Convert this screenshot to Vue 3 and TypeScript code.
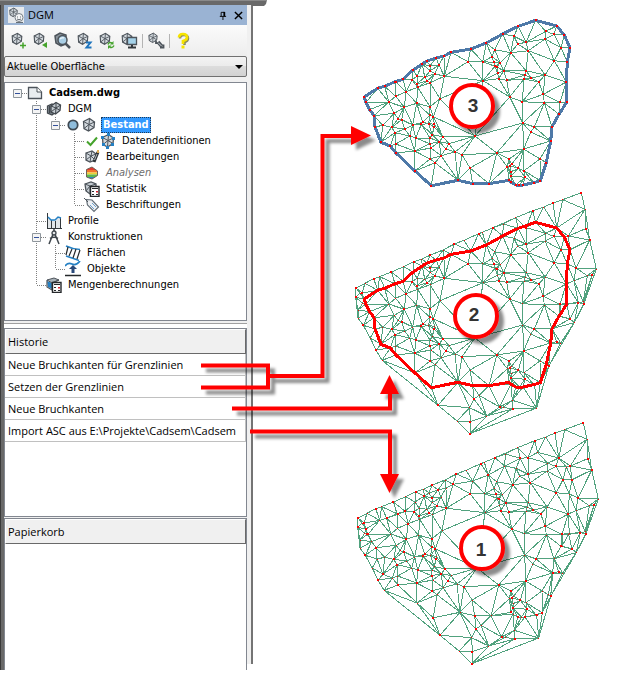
<script setup lang="ts">
import { ref } from 'vue'

type Point = [number, number]

interface TreeRow {
  label: string
  icons: string[]
  guides: string[]
  style?: 'root' | 'selected' | 'muted'
}

/* Guide codes: t = line up, b = line down, r = line right, x = expander box */
const rows: TreeRow[] = [
  { label: 'Cadsem.dwg', icons: ['doc'], guides: ['rx'], style: 'root' },
  { label: 'DGM', icons: ['layers'], guides: ['', 'tbrx'] },
  { label: 'Bestand', icons: ['dot', 'tin'], guides: ['', 'tb', 'trx'], style: 'selected' },
  { label: 'Datendefinitionen', icons: ['check', 'nodes'], guides: ['', 'tb', '', 'tbr'] },
  { label: 'Bearbeitungen', icons: ['edit'], guides: ['', 'tb', '', 'tbr'] },
  { label: 'Analysen', icons: ['analysis'], guides: ['', 'tb', '', 'tbr'], style: 'muted' },
  { label: 'Statistik', icons: ['stats'], guides: ['', 'tb', '', 'tbr'] },
  { label: 'Beschriftungen', icons: ['tag'], guides: ['', 'tb', '', 'tr'] },
  { label: 'Profile', icons: ['profile'], guides: ['', 'tbr'] },
  { label: 'Konstruktionen', icons: ['compass'], guides: ['', 'tbrx'] },
  { label: 'Flächen', icons: ['areas'], guides: ['', 'tb', 'tbr'] },
  { label: 'Objekte', icons: ['objects'], guides: ['', 'tb', 'tr'] },
  { label: 'Mengenberechnungen', icons: ['volume'], guides: ['', 'tr'] },
]

function guidePath(code: string): string {
  let d = ''
  if (code.includes('t')) d += 'M9.5 0V8'
  if (code.includes('b')) d += 'M9.5 8V16'
  if (code.includes('r')) d += 'M10 8.5H19'
  return d
}

const tools = [
  { icon: 'tool-add', label: 'Neues DGM' },
  { icon: 'tool-import', label: 'DGM importieren' },
  { icon: 'tool-search', label: 'DGM suchen' },
  { icon: 'tool-z', label: 'Höhe abfragen' },
  { icon: 'tool-refresh', label: 'Aktualisieren' },
  { icon: 'tool-screen', label: 'Anzeige' },
]

const surface = ref('Aktuelle Oberfläche')
const history = [
  'Neue Bruchkanten für Grenzlinien',
  'Setzen der Grenzlinien',
  'Neue Bruchkanten',
  'Import ASC aus E:\\Projekte\\Cadsem\\Cadsem',
]

/* Survey points, in thirds of a drawing unit */
function parse(list: string, dx: number, dy: number): Point[] {
  return list
    .trim()
    .split(/\s+/)
    .map((pair) => {
      const [x, y] = pair.split(',').map(Number)
      return [(x + dx) / 3, (y + dy) / 3] as Point
    })
}

const border = parse(
  `42,261 83,235 104,229 135,215 160,208 189,180 217,162 231,153 258,144 282,138 303,127 362,117
   409,99 458,72 505,49 557,31 620,48 643,75 660,113 652,156 649,216 650,277 627,313 606,350
   602,393 589,458 571,512 551,518 519,525 508,526 497,525 483,517 477,511 417,521 368,521
   324,511 244,527 195,483 138,429 121,408 93,397 75,351 72,317 59,299 48,277`,
  0, 0,
)

const inner = parse(
  `587,64 612,73 492,79 528,97 503,102 482,128 434,119 535,122 585,87 633,113 426,140 354,155
   398,155 431,157 450,158 441,171 435,169 461,182 528,182 613,152 443,190 446,206 399,212
   470,211 526,195 543,204 522,207 566,216 585,195 479,261 517,275 580,253 583,279 630,277 518,339
   553,351 542,366 521,417 570,447 440,429 375,378 477,447 485,462 481,467 472,470 505,475
   522,482 525,502 483,485 483,498 360,474 336,434 315,426 279,380 297,401 287,416 273,437
   268,395 255,458 240,447 243,414 239,401 247,374 194,423 137,402 197,384 179,378 214,343
   188,345 218,337 164,357 125,352 98,346 135,368 144,326 155,329 133,310 163,292
   116,276 168,245 137,259 138,217 201,198 201,221 203,232 186,210 224,202 232,213 240,218
   254,191 267,165 240,168 241,182 283,199 200,280 240,290 270,266 239,315 236,341 250,320
   253,343 252,351 240,384`,
  0, 0,
)

const hull = parse(
  `38,309 65,295 91,281 109,275 144,261 181,245 211,230 235,222 260,211 299,195 333,177 362,166
   406,146 417,142 449,128 517,98 568,77 601,66 629,54 658,44 714,23 725,73 739,165 759,252
   722,356 693,413 616,544 580,669 380,746 341,708 284,661 116,526 98,495 81,459 60,421
   44,400 37,337`,
  -20, -81,
)

const fringe = parse(
  `50,324 56,324 58,355 66,358 44,375 727,131 732,272 746,270 720,350 705,353 692,287 698,249
   672,355 675,153 480,117 548,128 650,393 680,402 652,474 640,470 430,693 381,710 379,668
   392,642 407,631 508,672 480,667 469,666 507,646 574,600 528,606`,
  -20, -81,
)

/* Bowyer-Watson Delaunay triangulation */
function triangulate(points: Point[]): number[][] {
  const n = points.length
  const pts: Point[] = [...points, [-20000, -15000], [20000, -15500], [300, 30000]]
  const circle = (t: number[]) => {
    const [a, b, c] = t.map((i) => pts[i])
    const bx = b[0] - a[0], by = b[1] - a[1], cx = c[0] - a[0], cy = c[1] - a[1]
    const d = 2 * (bx * cy - by * cx) || 1e-9
    const ux = (cy * (bx * bx + by * by) - by * (cx * cx + cy * cy)) / d
    const uy = (bx * (cx * cx + cy * cy) - cx * (bx * bx + by * by)) / d
    return { t, x: a[0] + ux, y: a[1] + uy, r: ux * ux + uy * uy }
  }
  let tris = [circle([n, n + 1, n + 2])]
  for (let i = 0; i < n; i++) {
    const [px, py] = pts[i]
    const edges = new Map<string, [number, number]>()
    tris = tris.filter((c) => {
      if ((px - c.x) ** 2 + (py - c.y) ** 2 >= c.r) return true
      for (let k = 0; k < 3; k++) {
        const a = c.t[k], b = c.t[(k + 1) % 3]
        const key = a < b ? `${a}-${b}` : `${b}-${a}`
        if (edges.has(key)) edges.delete(key)
        else edges.set(key, [a, b])
      }
      return false
    })
    edges.forEach(([a, b]) => tris.push(circle([a, b, i])))
  }
  return tris.map((c) => c.t).filter((t) => t.every((i) => i < n))
}

function inside([x, y]: Point, poly: Point[]): boolean {
  let hit = false
  for (let i = 0, j = poly.length - 1; i < poly.length; j = i++) {
    const [xi, yi] = poly[i], [xj, yj] = poly[j]
    if (yi > y !== yj > y && x < ((xj - xi) * (y - yi)) / (yj - yi) + xi) hit = !hit
  }
  return hit
}

function meshPath(points: Point[], outline: Point[]): string {
  const seen = new Set<string>()
  let d = ''
  for (const t of triangulate(points)) {
    const mid: Point = [
      (points[t[0]][0] + points[t[1]][0] + points[t[2]][0]) / 3,
      (points[t[0]][1] + points[t[1]][1] + points[t[2]][1]) / 3,
    ]
    if (!inside(mid, outline)) continue
    for (let k = 0; k < 3; k++) {
      const a = Math.min(t[k], t[(k + 1) % 3]), b = Math.max(t[k], t[(k + 1) % 3])
      if (seen.has(`${a}-${b}`)) continue
      seen.add(`${a}-${b}`)
      d += `M${points[a].map((v) => v.toFixed(1))}L${points[b].map((v) => v.toFixed(1))}`
    }
  }
  return d
}

const ring = (pts: Point[]) => pts.map((p) => p.map((v) => v.toFixed(1)).join(',')).join(' ')
const dots = (pts: Point[], s: number) =>
  pts.map(([x, y]) => `M${Math.round(x - s / 2)} ${Math.round(y - s / 2)}h${s}v${s}h-${s}z`).join('')

const fullPoints = [...border, ...inner, ...hull, ...fringe]
const fullMesh = meshPath(fullPoints, hull)
const clippedMesh = meshPath([...border, ...inner], border)
const borderRing = ring(border)
const hullRing = ring(hull)
const sparse = fullPoints.filter((_, i) => i % 2 === 0)
const dense = fullPoints.filter((_, i) => i % 2 === 1)
const fullDots = dots(sparse, 2) + dots(dense, 1)
const clippedDots = dots([...border, ...inner], 2)
</script>

<template>
  <svg class="symbols" aria-hidden="true">
    <defs>
      <symbol id="tin" viewBox="0 0 16 16">
        <path d="M2.5 4.5 8.5 1.5 13.5 5 13 10.5 7.5 14 3 11.5Z" fill="#d3d9de" stroke="#4d545b" stroke-width="1.3" />
        <path d="M2.5 4.5 8 7.5 13.5 5M8 7.5 8.5 1.5M8 7.5 13 10.5M8 7.5 7.5 14M8 7.5 3 11.5" fill="none" stroke="#4d545b" />
      </symbol>
      <symbol id="doc" viewBox="0 0 16 16">
        <path d="M1.5 2.5H10L14.5 7V13.5H1.5Z" fill="#e9edf0" stroke="#4d545b" stroke-width="1.3" />
        <path d="M10 2.5V7H14.5" fill="#fff" stroke="#4d545b" />
      </symbol>
      <symbol id="layers" viewBox="0 0 16 16">
        <path d="M1.500 5 6 3 10 5V11L6 14 1.500 12Z" fill="#7b848b" stroke="#41474d" stroke-width="1.3" />
        <path d="M5 5 10 1.500 14.500 4 14 9.500 9.500 13 5 11Z" fill="#c3cad0" stroke="#41474d" stroke-width="1.3" />
        <path d="M5 5 10 7 14.500 4M10 7V1.500M10 7 14 9.500M10 7 9.500 13M10 7 5 11M3.500 5V12" fill="none" stroke="#41474d" />
      </symbol>
      <symbol id="dot" viewBox="0 0 16 16">
        <circle cx="8" cy="8" r="4.7" fill="#8fbddc" stroke="#3f4952" stroke-width="1.8" />
      </symbol>
      <symbol id="check" viewBox="0 0 16 16">
        <path d="M3 8.5 6.5 12 13 4.5" fill="none" stroke="#45a32c" stroke-width="2" />
      </symbol>
      <symbol id="nodes" viewBox="0 0 16 16">
        <use href="#tin" />
        <path d="M1 3h3v3H1zM7 0h3v3H7zM12 4h3v3h-3zM11 10h3v3h-3zM6 13h3v3H6zM2 10h3v3H2z" fill="#2480c4" />
      </symbol>
      <symbol id="edit" viewBox="0 0 16 16">
        <path d="M2 4 8 2 12 5 11 11 6 13 2 11Z" fill="#d3d9de" stroke="#4d545b" stroke-width="1.3" />
        <path d="M2 4 7 7 12 5M7 7 8 2M7 7 2 11M7 7 6 13M7 7 11 11" fill="none" stroke="#4d545b" />
        <path d="M10 13 14 3" stroke="#2f3438" stroke-width="3" /><path d="M10.500 11 13 5" stroke="#b0b6bb" />
        <path d="M13 1h2v3h-2z" fill="#dfad57" />
      </symbol>
      <symbol id="analysis" viewBox="0 0 16 16">
        <clipPath id="analysis-shape"><path d="M2.500 4.500 8 2 13.500 6V10.500L8 14 2.500 12Z" /></clipPath>
        <g clip-path="url(#analysis-shape)">
          <path d="M2 1H14V5H2Z" fill="#e3382c" /><path d="M2 5H14V7.500H2Z" fill="#f2742a" />
          <path d="M2 7.500H14V9.500H2Z" fill="#ecd035" /><path d="M2 9.500H14V12H2Z" fill="#5cb94c" />
          <path d="M2 12H14V15H2Z" fill="#2a88c8" />
        </g>
        <path d="M2.500 4.500 8 2 13.500 6V10.500L8 14 2.500 12Z" fill="none" stroke="#6d6257" />
      </symbol>
      <symbol id="calc" viewBox="0 0 16 16">
        <path d="M6.500 5.500H15V15.500H6.500Z" fill="#fff" stroke="#25282b" stroke-width="1.400" />
        <path d="M8 7h6v1H8zM8 10h2v1H8zM8 13h2v1H8zM12 13h2v1h-2z" fill="#25282b" /><path d="M12 10h2v1.500h-2z" fill="#dc2430" />
      </symbol>
      <symbol id="stats" viewBox="0 0 16 16">
        <path d="M1 3 7 1 12 3 12 9 6 13 2 10Z" fill="#c5ccd2" stroke="#4d545b" stroke-width="1.300" />
        <path d="M1 3 6 5 12 3M6 5 2 10M6 5V12" fill="none" stroke="#4d545b" /><use href="#calc" />
      </symbol>
      <symbol id="tag" viewBox="0 0 16 16">
        <path d="M2.500 2.500 8 3 14.500 10 10 14.500 3.500 8Z" fill="#eef1f4" stroke="#667078" stroke-width="1.200" />
        <path d="M6 8 10 12M8 6 12 10" stroke="#6ca0cc" /><path d="M0 1 4 5" stroke="#4d545b" />
      </symbol>
      <symbol id="profile" viewBox="0 0 16 16">
        <path d="M1 4 5 7 9 8 12 4H15V15H1Z" fill="#e2e6e9" />
        <path d="M1.500 0V15.500M5.500 7V15M9.500 8V15M14.500 5V15M1 15.500H16" fill="none" stroke="#33383c" />
        <path d="M2 4 5 7 9 7 12 4 15 5" fill="none" stroke="#2480c4" stroke-width="1.500" />
      </symbol>
      <symbol id="compass" viewBox="0 0 16 16">
        <path d="M7.500 4 3 15M8.500 4 13 15M4 9.500Q8 7 12 9.500" fill="none" stroke="#3f464c" stroke-width="1.500" />
        <circle cx="8" cy="4" r="2" fill="#e4e7e9" stroke="#3f464c" stroke-width="1.300" /><path d="M8 0V2" stroke="#3f464c" stroke-width="1.500" />
      </symbol>
      <symbol id="areas" viewBox="0 0 16 16">
        <path d="M1 1Q7 4 15 4.500M1 11Q7 13 14 15.500" fill="none" stroke="#2480c4" stroke-width="1.500" />
        <path d="M3 2 1 10M7 4 4 11M11 4 8 13M15 5 12 14" fill="none" stroke="#25282b" stroke-width="1.200" />
      </symbol>
      <symbol id="objects" viewBox="0 0 16 16">
        <path d="M0 5Q3 1 7 3T15 0" fill="none" stroke="#2480c4" stroke-width="1.700" />
        <path d="M8 4 12 8H9.500V12H6.500V8H4Z" fill="#294979" /><path d="M0 14.500H16" stroke="#25282b" stroke-width="1.500" />
      </symbol>
      <symbol id="volume" viewBox="0 0 16 16">
        <path d="M1 4 6 6V12L2 10Z" fill="#2480c4" /><path d="M1 3 8 1 13 3 6 6Z" fill="#a8b1b8" stroke="#4d545b" />
        <path d="M1 3V10L6 13V6L13 3" fill="none" stroke="#4d545b" stroke-width="1.200" /><use href="#calc" />
      </symbol>

      <symbol id="tool-add" viewBox="0 0 18 18">
        <use href="#tin" width="14" height="14" /><path d="M10 13.500H16M13 10.500V16.500" stroke="#45a32c" stroke-width="1.500" />
      </symbol>
      <symbol id="tool-import" viewBox="0 0 18 18">
        <use href="#tin" width="14" height="14" /><path d="M10 13 15 10V16Z" fill="#45a32c" />
      </symbol>
      <symbol id="tool-search" viewBox="0 0 18 18">
        <path d="M1 4 6 1 12 3V12L7 14 2 11Z" fill="#8b949b" stroke="#4d545b" stroke-width="1.500" /><path d="M11.500 11.500 16 16" stroke="#4d545b" stroke-width="2.500" />
        <circle cx="8.500" cy="8" r="4.500" fill="#a9cee5" stroke="#4d545b" stroke-width="1.500" /><path d="M6 7Q8 5 10 6" fill="none" stroke="#e7f3fa" stroke-width="1.500" />
      </symbol>
      <symbol id="tool-z" viewBox="0 0 18 18">
        <use href="#tin" width="14" height="14" /><path d="M10 10.500H14.500L10.500 15.500H15.500" fill="none" stroke="#1d74bd" stroke-width="2" />
      </symbol>
      <symbol id="tool-refresh" viewBox="0 0 18 18">
        <use href="#tin" width="14" height="14" />
        <path d="M10 12.500Q11 9.500 14 11M16 13.500Q14.500 16.500 11.500 15" fill="none" stroke="#45a32c" stroke-width="1.500" />
        <path d="M15.500 9V12.500H12ZM10 17V13.500H13.500Z" fill="#45a32c" />
      </symbol>
      <symbol id="tool-screen" viewBox="0 0 18 18">
        <use href="#tin" width="14" height="14" /><path d="M7.500 5.500H16.500V12.500H7.500Z" fill="#a5d2e9" stroke="#4d545b" stroke-width="1.300" />
        <path d="M12 13V15M8 15.500H16" stroke="#33383c" stroke-width="2" />
      </symbol>
      <symbol id="tool-options" viewBox="0 0 18 18">
        <use href="#tin" width="12" height="12" />
        <path d="M11 10 15 14.500" stroke="#4d545b" stroke-width="3.500" /><path d="M9 8.500V11H12M13 15.500H16.500V12.500" fill="none" stroke="#4d545b" stroke-width="1.800" />
        <path d="M11 10.500 14.500 14" stroke="#cdd2d6" />
      </symbol>
      <symbol id="tool-help" viewBox="0 0 18 18">
        <path d="M5 5.500Q5 2 9 2T13 5.500Q13 8 9.500 9V12" fill="none" stroke="#8b8a5c" stroke-width="2.500" transform="translate(1 1)" />
        <path d="M5 5.500Q5 2 9 2T13 5.500Q13 8 9 9V12" fill="none" stroke="#f7e400" stroke-width="2.700" /><path d="M7.500 13.500h3v3h-3z" fill="#f7e400" />
      </symbol>
      <symbol id="brand" viewBox="0 0 16 16">
        <path d="M0 0H16V16H0Z" fill="#e6e9ec" /><use href="#tin" width="11" height="11" />
        <circle cx="11" cy="10.500" r="4" fill="#f4f5f6" stroke="#777f86" /><path d="M9.500 9.500v1M12.500 9.500v1M9 12Q11 13.500 13 12M8 15.500H15" fill="none" stroke="#666e75" />
      </symbol>

      <filter id="shadow" x="-20%" y="-20%" width="150%" height="150%">
        <feDropShadow dx="5" dy="5" stdDeviation="1.500" flood-color="#000" flood-opacity="0.450" />
      </filter>
    </defs>
  </svg>

  <main class="page">
    <section class="dock" aria-label="DGM">
      <div class="edge-left"></div>
      <div class="dock-body">
        <header class="titlebar">
          <svg class="icon"><use href="#brand" /></svg>
          <h1>DGM</h1>
          <button class="caption" aria-label="Anheften">
            <svg viewBox="0 0 10 10"><path d="M3.500 6V1.500H7M2 6H9M5.500 6V10" fill="none" stroke="#000" /><path d="M6 1H8V6H6Z" /></svg>
          </button>
          <button class="caption" aria-label="Schließen">
            <svg viewBox="0 0 10 10"><path d="M1 1 9 9M9 1 1 9" stroke="#000" stroke-width="1.600" /></svg>
          </button>
        </header>

        <nav class="toolbar" aria-label="Werkzeuge">
          <button v-for="t in tools" :key="t.icon" class="tool" :aria-label="t.label">
            <svg><use :href="'#' + t.icon" /></svg>
          </button>
          <span class="divider"></span>
          <button class="tool" aria-label="Optionen"><svg><use href="#tool-options" /></svg></button>
          <span class="divider"></span>
          <button class="tool" aria-label="Hilfe"><svg><use href="#tool-help" /></svg></button>
        </nav>

        <div class="picker">
          <select v-model="surface" aria-label="Oberfläche">
            <option>Aktuelle Oberfläche</option>
          </select>
          <svg viewBox="0 0 8 4" aria-hidden="true"><path d="M0 0H8L4 4Z" /></svg>
        </div>

        <ul class="tree" role="tree">
          <li v-for="row in rows" :key="row.label" class="row" role="treeitem" :aria-selected="row.style === 'selected'">
            <template v-for="(g, i) in row.guides" :key="i">
              <button v-if="g.includes('x')" class="guide" :aria-label="row.label + ' zuklappen'">
                <svg viewBox="0 0 19 16">
                  <path :d="guidePath(g)" class="dotted" />
                  <path d="M5.500 4.500H13.500V12.500H5.500Z" fill="#f4f4f4" stroke="#8f969c" />
                  <path d="M7 8.500H12" stroke="#33519b" />
                </svg>
              </button>
              <svg v-else class="guide" viewBox="0 0 19 16"><path :d="guidePath(g)" class="dotted" /></svg>
            </template>
            <svg v-for="ic in row.icons" :key="ic" class="icon"><use :href="'#' + ic" /></svg>
            <span class="label" :class="row.style">{{ row.label }}</span>
          </li>
        </ul>

        <div class="splitter"></div>

        <div class="list history">
          <table>
            <thead><tr><th scope="col">Historie</th></tr></thead>
            <tbody>
              <tr v-for="h in history" :key="h"><td>{{ h }}</td></tr>
            </tbody>
          </table>
        </div>

        <div class="list trash">
          <table>
            <thead><tr><th scope="col">Papierkorb</th></tr></thead>
          </table>
        </div>
      </div>
      <div class="edge-right"></div>
    </section>

    <svg class="drawing" viewBox="0 0 618 674" role="img" aria-label="Geländemodell in drei Bearbeitungsschritten">
      <path d="M0 0H267L266 4 264 6H252V5H0Z" fill="#696969" />
      <path d="M0 0H267V1H0Z" fill="#8a8a8a" />
      <g shape-rendering="crispEdges">
        <g transform="translate(350 10)">
          <path :d="clippedMesh" class="mesh" />
          <polygon :points="borderRing" class="limit blue" />
          <path :d="clippedDots" fill="#f00" />
        </g>
        <g transform="translate(350 212)">
          <path :d="fullMesh" class="mesh" />
          <polygon :points="hullRing" class="mesh" />
          <path :d="fullDots" fill="#f00" />
          <polygon :points="borderRing" class="limit red" />
        </g>
        <g transform="translate(352 442)">
          <path :d="fullMesh" class="mesh" />
          <polygon :points="hullRing" class="mesh" />
          <path :d="fullDots" fill="#f00" />
        </g>
      </g>

      <g filter="url(#shadow)">
        <path d="M201 365.500H268V387.500H201M268 376H322.500V136H353M232 408.500H390V393M250 431.500H390V476" fill="none" stroke="#f00" stroke-width="4" />
        <path d="M351 126V145L371 135.500ZM380 394H399L389.500 375ZM380 474H399L389.500 493Z" fill="#f00" />
      </g>

      <g class="badges" filter="url(#shadow)">
        <circle cx="472" cy="106" r="21" />
        <circle cx="476" cy="316" r="21" />
        <circle cx="482" cy="548" r="21" />
      </g>
      <g class="digits">
        <text x="473" y="112">3</text>
        <text x="474" y="321">2</text>
        <text x="481" y="556">1</text>
      </g>
    </svg>
  </main>
</template>

<style>
body {
  background: #fff;
}
</style>

<style scoped>
.symbols {
  display: block;
  width: 0;
  height: 0;
}
.page {
  display: grid;
  grid-template-columns: 253px 1fr;
  align-items: start;
  color: #000;
  font: 11px/16px "DejaVu Sans Condensed", "Open Sans", sans-serif;
}
.dock {
  grid-area: 1 / 1;
  display: flex;
  padding-top: 5px;
}
.edge-left {
  width: 4px;
  box-sizing: border-box;
  border-left: 1px solid #3a3a3a;
  background: #696969;
}
.edge-right {
  width: 6px;
  box-sizing: border-box;
  margin-bottom: 6px;
  border-right: 2px solid #747474;
  background: #f0f0f0;
}
.dock-body {
  flex: 1;
  min-width: 0;
  display: flex;
  flex-direction: column;
  background: #f0f0f0;
}
button {
  padding: 0;
  border: 0;
  background: none;
}
svg {
  display: block;
}
.icon {
  flex: none;
  width: 16px;
  height: 16px;
}
.titlebar {
  display: flex;
  align-items: center;
  gap: 4px;
  height: 20px;
  padding: 0 3px 0 4px;
  background: #9ab3d3;
}
h1 {
  flex: 1;
  margin: 0;
  font: 11px/16px "Open Sans", sans-serif;
}
.caption {
  display: grid;
  place-items: center;
  width: 12px;
  height: 16px;
}
.caption svg {
  width: 9px;
  height: 9px;
}
.toolbar {
  display: flex;
  align-items: center;
  gap: 4px;
  height: 31px;
  padding-left: 6px;
  background: linear-gradient(#fbfbfb, #ededed);
}
.tool svg {
  width: 18px;
  height: 18px;
}
.divider {
  width: 1px;
  height: 14px;
  background: #b4b4b4;
}
.picker {
  display: grid;
  align-items: center;
  margin-bottom: 5px;
}
.picker select,
.picker svg {
  grid-area: 1 / 1;
}
.picker select {
  appearance: none;
  width: 100%;
  height: 21px;
  padding: 0 20px 0 2px;
  border: 1px solid #707070;
  border-radius: 2px;
  color: #000;
  background: linear-gradient(#f3f3f3, #ebebeb 50%, #dcdcdc 50%, #d2d2d2);
  font: inherit;
}
.picker svg {
  justify-self: end;
  width: 8px;
  height: 4px;
  margin-right: 4px;
  pointer-events: none;
}
.tree {
  min-height: 234px;
  margin: 0;
  padding: 2px 0 1px 3px;
  border: 1px solid #828790;
  background: #fff;
  list-style: none;
}
.row {
  display: flex;
  height: 16px;
}
.guide {
  flex: none;
  width: 19px;
  height: 16px;
}
.dotted {
  fill: none;
  stroke: #808080;
  stroke-dasharray: 1 1;
}
.label {
  padding: 0 2px;
  margin-left: 4px;
  white-space: nowrap;
}
.root,
.selected {
  font-weight: bold;
}
.selected {
  box-sizing: border-box;
  color: #fff;
  background: #3399ff;
  outline: 1px dotted #1c3a58;
  outline-offset: -1px;
}
.muted {
  color: #6d6d6d;
  font-style: italic;
}
.splitter {
  height: 7px;
  background: linear-gradient(#f0f0f0 2px, #a0a0a0 2px 3px, #fff 3px);
}
.list {
  box-sizing: border-box;
  border: 1px solid #828790;
  background: #fff;
}
.history {
  min-height: 189px;
  margin-bottom: 1px;
}
.trash {
  min-height: 152px;
  border-bottom: 0;
}
table {
  width: 100%;
  table-layout: fixed;
  border-collapse: separate;
  border-spacing: 0;
  font: 11px/16px "Open Sans", sans-serif;
}
th,
td {
  box-sizing: border-box;
  padding: 0 3px;
  overflow: hidden;
  white-space: nowrap;
  text-align: left;
  font-weight: normal;
}
th {
  height: 25px;
  padding: 0 2px;
  border: 1px solid #fff;
  border-right-color: #696969;
  border-bottom-color: #696969;
  background: #f0f0f0;
}
td {
  height: 22px;
  border-right: 1px solid #c0c0c0;
  border-bottom: 1px solid #c0c0c0;
}
.drawing {
  grid-area: 1 / 1 / 2 / 3;
  width: 100%;
  height: auto;
  max-width: 618px;
  pointer-events: none;
}
.mesh {
  fill: none;
  stroke: #51a27e;
  stroke-width: 1;
}
.limit {
  fill: none;
  stroke-width: 3;
  stroke-linejoin: round;
}
.blue {
  stroke: #4e79a8;
}
.red {
  stroke: #f00;
}
.badges circle {
  fill: #fff;
  stroke: #f00;
  stroke-width: 4;
}
.digits {
  font: bold 19px "Liberation Sans", sans-serif;
  fill: #333;
  text-anchor: middle;
}
</style>
